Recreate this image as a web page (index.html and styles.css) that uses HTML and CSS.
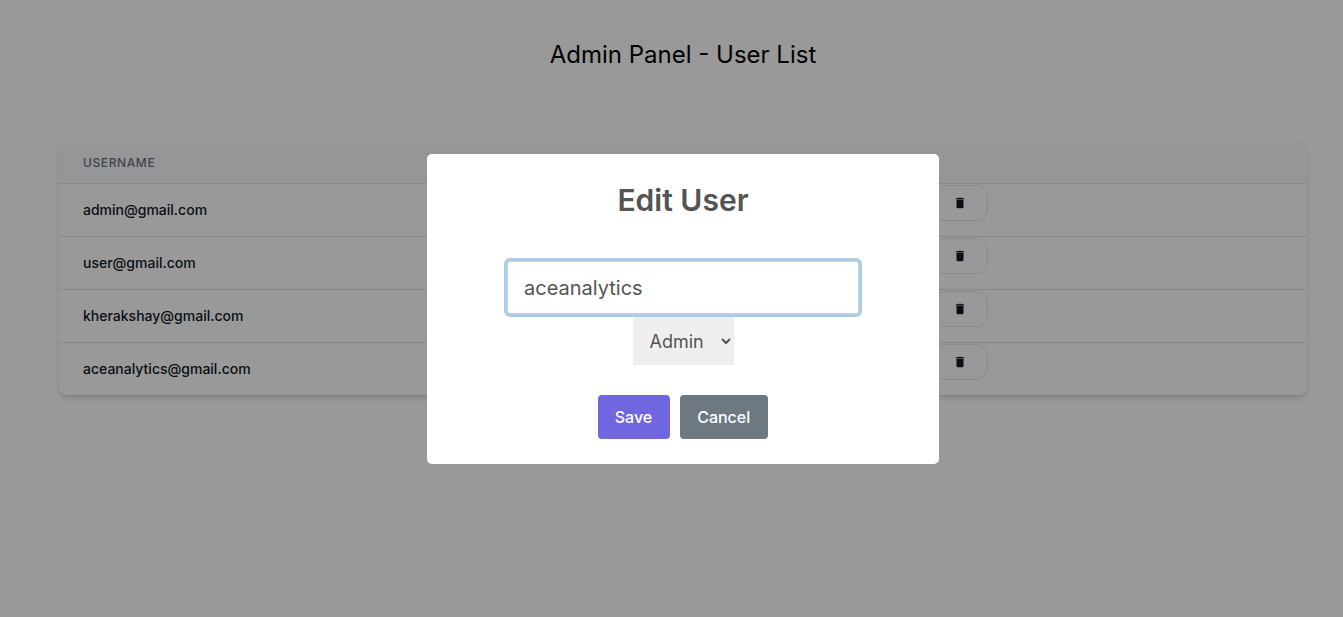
FILE: index.html
```html
<!DOCTYPE html>
<html lang="en">
<head>
<meta charset="utf-8">
<title>Admin Panel</title>
<link rel="stylesheet" href="styles.css">
</head>
<body>
<svg class="sprite" aria-hidden="true">
  <symbol id="trash" viewBox="0 0 24 24"><path d="M6 19c0 1.100.9 2 2 2h8c1.100 0 2-.9 2-2V7H6zM19 4h-3.500l-1-1h-5l-1 1H5v2h14z"/></symbol>
</svg>
<main class="page">
  <h1 class="page-title">Admin Panel - User List</h1>
  <div class="card">
    <table class="users">
      <colgroup><col class="col-name"><col class="col-actions"></colgroup>
      <thead>
        <tr><th scope="col">Username</th><td></td></tr>
      </thead>
      <tbody>
        <tr><td>admin@gmail.com</td><td class="actions"><button class="delete" type="button"><svg class="icon"><use href="#trash"/></svg></button></td></tr>
        <tr><td>user@gmail.com</td><td class="actions"><button class="delete" type="button"><svg class="icon"><use href="#trash"/></svg></button></td></tr>
        <tr><td>kherakshay@gmail.com</td><td class="actions"><button class="delete" type="button"><svg class="icon"><use href="#trash"/></svg></button></td></tr>
        <tr><td>aceanalytics@gmail.com</td><td class="actions"><button class="delete" type="button"><svg class="icon"><use href="#trash"/></svg></button></td></tr>
      </tbody>
    </table>
  </div>
</main>
<div class="overlay">
  <form class="modal" role="dialog" aria-labelledby="modal-title">
    <h2 class="modal-title" id="modal-title">Edit User</h2>
    <input class="field" type="text" value="aceanalytics" aria-labelledby="modal-title">
    <select class="role" aria-labelledby="modal-title"><option>Admin</option></select>
    <div class="modal-actions">
      <button class="btn btn-save" type="button">Save</button>
      <button class="btn btn-cancel" type="button">Cancel</button>
    </div>
  </form>
</div>
</body>
</html>
```
FILE: styles.css
```css
* { box-sizing: border-box; }
body {
  margin: 0;
  background: #fff;
  color: #000;
  font-family: Inter, "Liberation Sans", sans-serif;
}
button, input, select { font-family: inherit; }
.sprite { display: none; }

.page {
  min-height: 100vh;
  padding: 39px 36px 24px 59px;
}
.page-title {
  margin: 0 0 72px;
  font-size: 24px;
  line-height: 32px;
  font-weight: 400;
  text-align: center;
}
.card {
  overflow: hidden;
  border-radius: 8px;
  box-shadow: 0 4px 6px -1px rgba(0, 0, 0, .1), 0 2px 4px -1px rgba(0, 0, 0, .1);
}
.users {
  width: 100%;
  table-layout: fixed;
  border-spacing: 0;
}
.col-name { width: 70%; }
.users th {
  padding: 12px 24px;
  font-size: 12px;
  line-height: 16px;
  font-weight: 500;
  letter-spacing: .05em;
  text-align: left;
  text-transform: uppercase;
  color: #6b7280;
}
.users thead { background: #f7fafc; }
.users tbody td {
  border-top: 1px solid #e0e2e5;
  padding: 16px 24px;
  font-size: 14px;
  line-height: 20px;
  font-weight: 500;
  color: #111827;
}
.users tbody td.actions {
  padding: 1px 0 0;
  vertical-align: top;
}
.delete {
  display: flex;
  align-items: center;
  justify-content: center;
  width: 55px;
  height: 36px;
  border: 1px solid #e5e7eb;
  border-radius: 12px;
  background: transparent;
  color: #111827;
}
.icon {
  flex: none;
  width: 14px;
  height: 14px;
  fill: currentColor;
}

.overlay {
  position: fixed;
  inset: 0;
  display: flex;
  align-items: center;
  justify-content: center;
  padding-left: 23px;
  background: rgba(0, 0, 0, .4);
}
.modal {
  display: flex;
  flex-direction: column;
  align-items: center;
  width: 512px;
  max-width: 100%;
  padding: 24px 75px 25px;
  border-radius: 5px;
  background: #fff;
  color: #545454;
}
.modal-title {
  margin: 0 0 38px;
  font-size: 30px;
  line-height: 45px;
  font-weight: 600;
}
.field {
  width: 352px;
  max-width: 100%;
  height: 53px;
  padding: 1px 16px 0;
  border: 1px solid #b4dbed;
  border-radius: 3px;
  outline: none;
  background: #fff;
  box-shadow: 0 0 0 3px #b1cae3;
  font-size: 20px;
  color: inherit;
}
.role {
  height: 48px;
  margin-top: 3px;
  padding: 7px 13px 6px;
  border: 0;
  border-radius: 0;
  background-color: #efefef;
  font-size: 18px;
  color: inherit;
}
.modal-actions {
  display: flex;
  gap: 10px;
  margin-top: 30px;
}
.btn {
  height: 44px;
  padding: 0 18px 0 17px;
  border: 0;
  border-radius: 4px;
  font-size: 16px;
  font-weight: 500;
  color: #fff;
}
.btn-save { background: #7066e0; }
.btn-cancel { background: #6e7881; }
```
